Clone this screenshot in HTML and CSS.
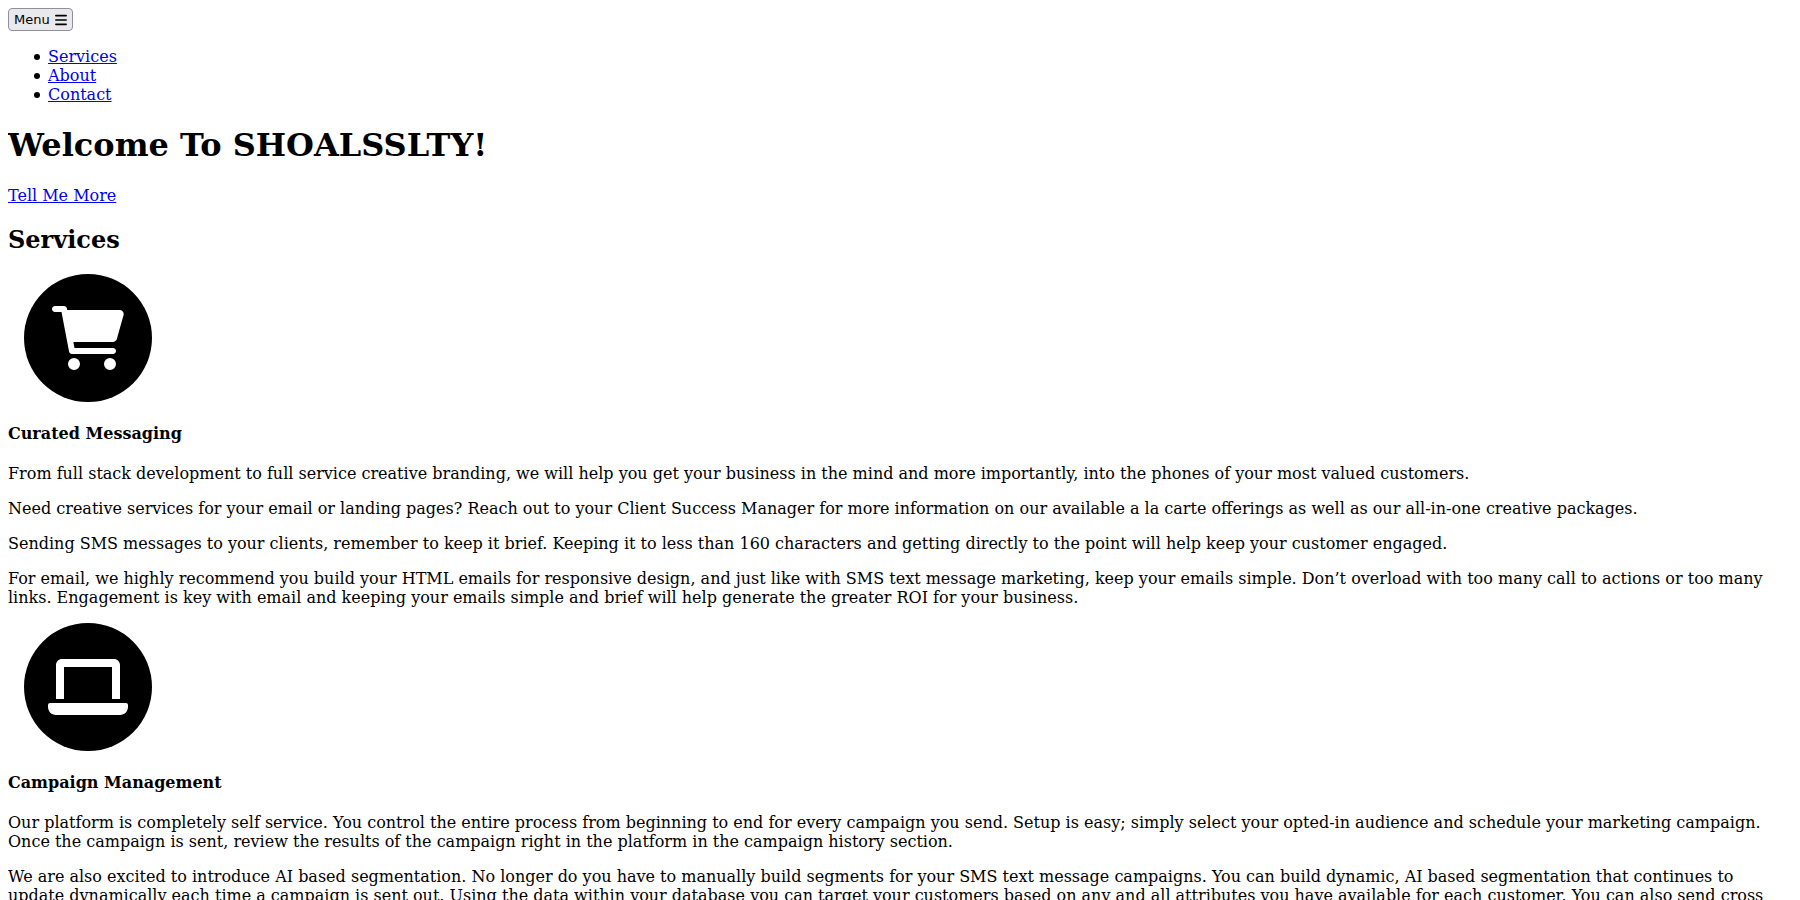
FILE: index.html
```html
<!DOCTYPE html>
<html lang="en">
<head>
<meta charset="utf-8">
<meta name="viewport" content="width=device-width, initial-scale=1">
<title>SHOALSSLTY</title>
<link rel="stylesheet" href="styles.css">
</head>
<body class="page">
<nav class="nav">
  <button class="menu-button" type="button">Menu
    <svg class="menu-icon" viewBox="0 0 448 512" aria-hidden="true"><path d="M0 96C0 78.300 14.300 64 32 64H416c17.700 0 32 14.300 32 32s-14.300 32-32 32H32C14.300 128 0 113.700 0 96zM0 256c0-17.700 14.300-32 32-32H416c17.700 0 32 14.300 32 32s-14.300 32-32 32H32c-17.700 0-32-14.300-32-32zM448 416c0 17.700-14.300 32-32 32H32c-17.700 0-32-14.300-32-32s14.300-32 32-32H416c17.700 0 32 14.300 32 32z"/></svg>
  </button>
  <ul class="nav-list">
    <li class="nav-item"><a class="link" href="#services">Services</a></li>
    <li class="nav-item"><a class="link" href="#about">About</a></li>
    <li class="nav-item"><a class="link" href="#contact">Contact</a></li>
  </ul>
</nav>
<header>
  <h1 class="title">Welcome To SHOALSSLTY!</h1>
  <a class="link" href="#services">Tell Me More</a>
</header>
<main id="services">
  <h2 class="section-title">Services</h2>
  <section>
    <div class="badge">
      <svg class="cart-icon" viewBox="0 0 576 512" aria-hidden="true"><path d="M96 0C107.500 0 117.400 8.190 119.600 19.510L121.100 32H541.800C562.100 32 578.300 52.250 572.600 72.660L518.600 264.700C514.700 278.500 502.100 288 487.100 288H170.700L179.900 336H488C501.300 336 512 346.700 512 360C512 373.300 501.300 384 488 384H159.100C148.500 384 138.600 375.800 136.400 364.500L76.140 48H24C10.750 48 0 37.250 0 24C0 10.750 10.750 0 24 0H96zM128 464a48 48 0 1 1 96 0a48 48 0 1 1-96 0zM416 464a48 48 0 1 1 96 0a48 48 0 1 1-96 0z"/></svg>
    </div>
    <h4 class="service-title">Curated Messaging</h4>
    <p class="text">From full stack development to full service creative branding, we will help you get your business in the mind and more importantly, into the phones of your most valued customers.</p>
    <p class="text">Need creative services for your email or landing pages? Reach out to your Client Success Manager for more information on our available a la carte offerings as well as our all-in-one creative packages.</p>
    <p class="text">Sending SMS messages to your clients, remember to keep it brief. Keeping it to less than 160 characters and getting directly to the point will help keep your customer engaged.</p>
    <p class="text">For email, we highly recommend you build your HTML emails for responsive design, and just like with SMS text message marketing, keep your emails simple. Don’t overload with too many call to actions or too many links. Engagement is key with email and keeping your emails simple and brief will help generate the greater ROI for your business.</p>
  </section>
  <section>
    <div class="badge">
      <svg class="laptop-icon" viewBox="0 0 640 512" aria-hidden="true"><path d="M128 96h384v256h64V80C576 53.630 554.400 32 528 32h-416C85.630 32 64 53.630 64 80V352h64V96zM624 384h-608C7.250 384 0 391.300 0 400V416c0 35.250 28.750 64 64 64h512c35.250 0 64-28.750 64-64v-16C640 391.300 632.800 384 624 384z"/></svg>
    </div>
    <h4 class="service-title">Campaign Management</h4>
    <p class="text">Our platform is completely self service. You control the entire process from beginning to end for every campaign you send. Setup is easy; simply select your opted-in audience and schedule your marketing campaign. Once the campaign is sent, review the results of the campaign right in the platform in the campaign history section.</p>
    <p class="text">We are also excited to introduce AI based segmentation. No longer do you have to manually build segments for your SMS text message campaigns. You can build dynamic, AI based segmentation that continues to update dynamically each time a campaign is sent out. Using the data within your database you can target your customers based on any and all attributes you have available for each customer. You can also send cross</p>
  </section>
</main>
</body>
</html>
```

FILE: styles.css
```css
.page {
  margin: 8px;
  background: #fff;
  color: #000;
  font: 16px/19px "DejaVu Serif", serif;
}

.nav {
  display: flex;
  flex-direction: column;
  align-items: flex-start;
}

.menu-button {
  display: flex;
  align-items: center;
  gap: 5px;
  padding: 2px 5px;
  border: 1px solid #8f8f9d;
  border-radius: 4px;
  background: #e9e9ed;
  color: #000;
  font: 13px/17px "DejaVu Sans", sans-serif;
}

.menu-icon {
  width: 12px;
  height: 14px;
  fill: currentColor;
}

.nav-list {
  margin: 16px 0 0;
  padding-left: 26px;
  list-style: none;
}

.nav-item {
  display: flex;
  align-items: center;
  gap: 8px;
}

.nav-item::before {
  content: "";
  width: 6px;
  height: 6px;
  border-radius: 50%;
  background: #000;
}

.link {
  color: #0000ee;
  text-decoration: underline;
}

.title {
  margin: 22px 0;
  font-size: 32px;
  line-height: 38px;
}

.section-title {
  margin: 20px 0;
  font-size: 24px;
  line-height: 29px;
}

.badge {
  display: flex;
  align-items: center;
  justify-content: center;
  width: 128px;
  height: 128px;
  margin-left: 16px;
  border-radius: 50%;
  background: #000;
}

.cart-icon {
  width: 72px;
  height: 64px;
  fill: #fff;
}

.laptop-icon {
  width: 80px;
  height: 64px;
  fill: #fff;
}

.service-title {
  margin: 22px 0 21px;
  font-size: 16px;
}

.text {
  margin: 16px 0;
}
```
